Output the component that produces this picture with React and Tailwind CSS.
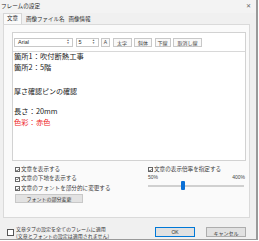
const font = { fontFamily: '"Noto Sans CJK JP", "Liberation Sans", sans-serif' }
const latin = { fontFamily: '"Liberation Sans", "Noto Sans CJK JP", sans-serif' }

function Check({ checked, label }) {
  return (
    <div className="flex items-center gap-[1px] h-[9.5px] text-[5.6px] leading-none text-[#3a3a3a]">
      <span className="w-[5px] h-[5px] border-[0.8px] border-[#666] bg-white flex items-center justify-center">
        {checked && (
          <svg width="4" height="4" viewBox="0 0 5 5">
            <path d="M0.4 2.6 L2 4.2 L4.7 0.6" fill="none" stroke="#333" strokeWidth="1" />
          </svg>
        )}
      </span>
      <span>{label}</span>
    </div>
  )
}

function Spin() {
  return (
    <span className="flex flex-col items-center justify-center text-[3px] leading-[3px] text-[#666] w-[4px]">
      <span>▲</span>
      <span>▼</span>
    </span>
  )
}

function ToolBtn({ children, w }) {
  return (
    <div className={`h-[9px] ${w} border-[0.8px] border-[#c8c8c8] bg-[#f9f9f9] text-[5px] leading-none text-[#444] flex items-center justify-center`}>
      {children}
    </div>
  )
}

export default function App() {
  return (
    <div className="w-[258px] h-[240px] bg-[#f0f0f0] border-r-2 border-b border-[#9a9a9a] flex flex-col text-[#2a2a2a]" style={font}>
      {/* title */}
      <div className="h-[13px] flex items-center justify-between pl-[1px] pr-[5px] text-[5.6px] leading-none bg-[#f3f3f3]">
        <span>フレームの設定</span>
        <span className="text-[6px] text-[#666]">✕</span>
      </div>

      {/* tabs */}
      <div className="flex items-end h-[11px] pl-[3px] text-[5.5px] leading-none">
        <div className="h-[11px] px-[3px] flex items-center bg-[#fafafa] border-[0.8px] border-b-0 border-[#d6d6d6]">文章</div>
        <div className="h-[9px] pl-[4px] pr-[2px] flex items-center">画像ファイル名</div>
        <div className="h-[9px] px-[2px] flex items-center">画像情報</div>
      </div>

      {/* panel */}
      <div className="ml-[3px] mr-[6px] h-[195px] border-[0.8px] border-[#dadada] bg-[#fafafa] flex flex-col pl-[8px] pr-[3px] pt-[7px]">
        <div className="h-[129px] border-[0.8px] border-[#d2d2d2] bg-white flex flex-col">
          <div className="h-[19px] flex items-center pl-[1px] gap-[2.5px] border-b-[0.8px] border-[#d8d8d8] pt-[1px]">
            <div className="h-[9px] w-[59px] border-[0.8px] border-[#c8c8c8] bg-white flex items-center justify-between pl-[3px] pr-[2px] text-[5.5px] leading-none" style={latin}>
              <span>Arial</span>
              <Spin />
            </div>
            <div className="h-[9px] w-[23px] border-[0.8px] border-[#c8c8c8] bg-white flex items-center justify-between pl-[2px] pr-[2px] text-[5.5px] leading-none" style={latin}>
              <span>5</span>
              <Spin />
            </div>
            <ToolBtn w="w-[9px]"><span style={latin}>A</span></ToolBtn>
            <ToolBtn w="w-[19px]">太字</ToolBtn>
            <ToolBtn w="w-[18px]">斜体</ToolBtn>
            <ToolBtn w="w-[16px]">下線</ToolBtn>
            <ToolBtn w="w-[29px]">取消し線</ToolBtn>
          </div>
          <div className="flex-1 pl-[1px] text-[7.3px] leading-none text-[#222]">
            <div className="h-[10px] flex items-center">箇所1：吹付断熱工事</div>
            <div className="h-[12px] flex items-center">箇所2：5階</div>
            <div className="h-[12.5px]" />
            <div className="h-[10px] flex items-center text-[7px]">厚さ確認ピンの確認</div>
            <div className="h-[10px]" />
            <div className="h-[11px] flex items-center">長さ：20mm</div>
            <div className="h-[11px] flex items-center text-[#ee1c25]">色彩：赤色</div>
          </div>
        </div>

        <div className="flex mt-[4px]">
          <div className="w-[136px] flex flex-col pl-[3px]">
            <Check checked label="文章を表示する" />
            <Check checked label="文章の下地を表示する" />
            <Check checked label="文章のフォントを部分的に変更する" />
          </div>
          <div className="flex-1 flex flex-col">
            <Check checked label="文章の表示倍率を指定する" />
            <div className="flex justify-between text-[5px] leading-none text-[#444] mt-[1px] pr-[1px]" style={latin}>
              <span>50%</span>
              <span>400%</span>
            </div>
            <div className="relative h-[10px] mr-[2px] mt-[1px]">
              <div className="absolute left-0 right-0 top-[4px] h-[1.5px] bg-[#d0d0d0]" />
              <div className="absolute left-[33px] top-0 w-[4px] h-[9px] rounded-[1px] bg-[#0a6fd6]" />
            </div>
          </div>
        </div>

        <div className="mt-[1px] ml-[3px] w-[68px] h-[9px] border-[0.8px] border-[#c8c8c8] bg-[#e2e2e2] text-[5px] leading-none text-[#333] flex items-center justify-center">
          フォントの部分変更
        </div>
      </div>

      {/* bottom */}
      <div className="flex items-center pl-[7px] pr-[10px] mt-[7px]">
        <span className="w-[7px] h-[7px] border-[0.8px] border-[#555] bg-white mr-[2px]" />
        <div className="flex flex-col text-[5px] leading-[7px] text-[#333]">
          <span>文章タブの設定を全てのフレームに適用</span>
          <span>(文章とフォントの設定は適用されません)</span>
        </div>
        <div className="ml-auto w-[40px] h-[10px] border-[0.8px] border-[#0078d7] bg-[#e1e1e1] text-[5px] text-[#333] leading-none flex items-center justify-center" style={latin}>OK</div>
        <div className="ml-[11px] w-[40px] h-[10px] border-[0.8px] border-[#adadad] bg-[#e1e1e1] text-[5px] text-[#333] leading-none flex items-center justify-center">キャンセル</div>
      </div>
    </div>
  )
}
